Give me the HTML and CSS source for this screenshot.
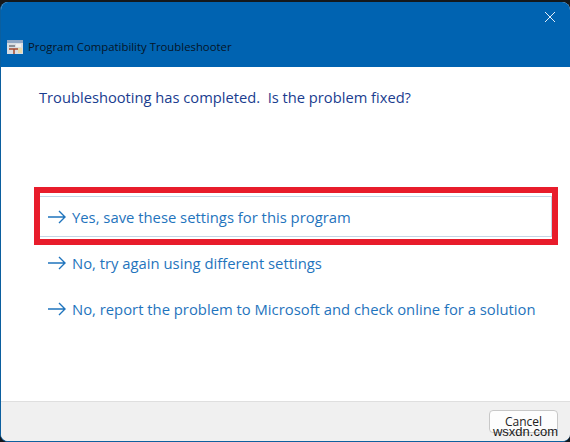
FILE: index.html
```html
<!DOCTYPE html>
<html lang="en">
<head>
    <meta charset="UTF-8">
    <title>Program Compatibility Troubleshooter</title>
    <link rel="stylesheet" href="styles.css">
</head>
<body>
    <div class="window">
        <div class="titlebar">
            <div class="close">
                <svg width="12" height="12" viewBox="0 0 12 12"><path d="M1 1L11 11M11 1L1 11" stroke="#e4eef8" stroke-width="1" fill="none"/></svg>
            </div>
            <div class="caption">
                <svg class="appicon" width="16" height="16" viewBox="0 0 16 16">
                    <rect x="0" y="1" width="16" height="14" fill="#d9dde2"/>
                    <rect x="0" y="1" width="16" height="3" fill="#8fa6c4"/>
                    <rect x="2" y="6" width="6" height="2" fill="#8a8f96"/>
                    <rect x="9" y="5" width="5" height="3" fill="#f0f0f0"/>
                    <path d="M2 10H11M7 10V15" stroke="#a5482e" stroke-width="1.5" fill="none"/>
                    <rect x="11" y="9" width="4" height="5" fill="#e8d9a8"/>
                </svg>
                <span>Program Compatibility Troubleshooter</span>
            </div>
        </div>
        <div class="content">
            <h1 class="heading">Troubleshooting has completed.&nbsp; Is the problem fixed?</h1>
            <ul class="options">
                <li class="option selected">
                    <svg class="arrow" width="20" height="14" viewBox="0 0 20 14"><path d="M1 7H18M12 1L18 7L12 13" stroke="#1f74bd" stroke-width="1.4" fill="none"/></svg>
                    <span>Yes, save these settings for this program</span>
                </li>
                <li class="option">
                    <svg class="arrow" width="20" height="14" viewBox="0 0 20 14"><path d="M1 7H18M12 1L18 7L12 13" stroke="#1f74bd" stroke-width="1.4" fill="none"/></svg>
                    <span>No, try again using different settings</span>
                </li>
                <li class="option">
                    <svg class="arrow" width="20" height="14" viewBox="0 0 20 14"><path d="M1 7H18M12 1L18 7L12 13" stroke="#1f74bd" stroke-width="1.4" fill="none"/></svg>
                    <span>No, report the problem to Microsoft and check online for a solution</span>
                </li>
            </ul>
        </div>
        <div class="footer">
            <button class="cancel">Cancel</button>
        </div>
    </div>
    <div class="highlight"></div>
    <div class="watermark">wsxdn.com</div>
</body>
</html>
```

FILE: styles.css
```css
*{
    margin: 0;
    padding: 0;
    box-sizing: border-box;
}
body{
    width: 570px;
    height: 442px;
    background: #14181c;
    padding-top: 2px;
    overflow: hidden;
    position: relative;
    font-family: "Open Sans", "Noto Sans", sans-serif;
}
.window{
    width: 570px;
    height: 440px;
    background: #fff;
    border-left: 1px solid #0b5f9f;
    border-bottom: 1px solid #0f5f9e;
    border-radius: 8px;
    overflow: hidden;
    display: flex;
    flex-direction: column;
}
.titlebar{
    height: 65px;
    background: #0063b1;
    flex: none;
    display: flex;
    flex-direction: column;
    justify-content: space-between;
}
.close{
    display: flex;
    justify-content: flex-end;
    padding: 9px 14px 0 0;
}
.caption{
    display: flex;
    align-items: center;
    gap: 5px;
    padding: 0 0 12px 6px;
    font-size: 11.35px;
    line-height: 16px;
    color: #061528;
}
.appicon{
    flex: none;
}
.content{
    flex: 1;
    padding: 18px 18px 0 38px;
}
.heading{
    font-size: 14.7px;
    line-height: 24px;
    font-weight: 400;
    color: #1a3d8f;
    margin-bottom: 87px;
}
.options{
    list-style: none;
}
.option{
    display: flex;
    align-items: center;
    gap: 5px;
    height: 41px;
    margin-bottom: 5px;
    padding-left: 7px;
    font-size: 14.82px;
    color: #1f74bd;
    border: 1px solid transparent;
}
.option.selected{
    border-color: #c3d6e6;
}
.arrow{
    flex: none;
}
.footer{
    height: 40px;
    flex: none;
    background: #f0f0f0;
    border-top: 1px solid #dfdfdf;
    display: flex;
    justify-content: flex-end;
    padding: 8px 12px 0 0;
}
.cancel{
    width: 69px;
    height: 23px;
    background: #fdfdfd;
    border: 1px solid #c8c8c8;
    border-radius: 4px;
    font-family: "Open Sans", "Noto Sans", sans-serif;
    font-size: 12px;
    color: #222;
}
.highlight{
    position: absolute;
    left: 34px;
    top: 187px;
    width: 524px;
    height: 58px;
    border: 6px solid #e81c2b;
}
.watermark{
    position: absolute;
    right: 12px;
    top: 424px;
    font-family: "Liberation Sans", sans-serif;
    font-size: 13px;
    line-height: 16px;
    color: #1a1a1a;
}
```
